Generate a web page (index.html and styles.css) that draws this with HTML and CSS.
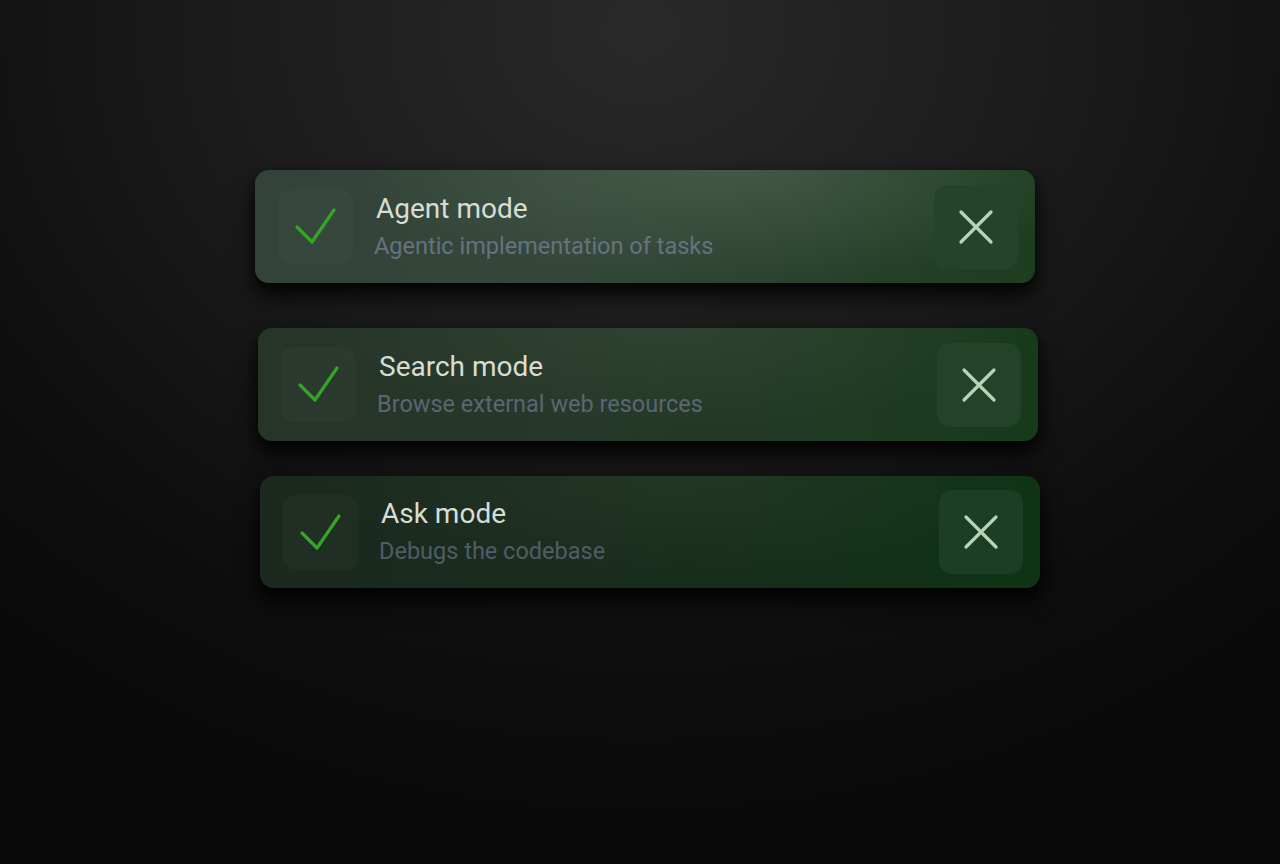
FILE: index.html
```html
<!DOCTYPE html>
<html lang="en">
<head>
<meta charset="utf-8">
<title>Modes</title>
<link rel="stylesheet" href="styles.css">
</head>
<body>
<main class="stage">
  <div class="list">
    <div class="card card--1">
      <div class="check">
        <svg width="75" height="75" viewBox="0 0 75 75"><path d="M19 38 L34 53 L56 21" fill="none" stroke="#33a626" stroke-width="3.2" stroke-linecap="round" stroke-linejoin="round"/></svg>
      </div>
      <div class="text">
        <div class="title">Agent mode</div>
        <div class="sub">Agentic implementation of tasks</div>
      </div>
      <div class="close">
        <svg width="84" height="84" viewBox="0 0 84 84"><path d="M27 27 L57 57 M57 27 L27 57" fill="none" stroke="#b9d3b6" stroke-width="3.2" stroke-linecap="round"/></svg>
      </div>
    </div>
    <div class="card card--2">
      <div class="check">
        <svg width="75" height="75" viewBox="0 0 75 75"><path d="M19 38 L34 53 L56 21" fill="none" stroke="#33a626" stroke-width="3.2" stroke-linecap="round" stroke-linejoin="round"/></svg>
      </div>
      <div class="text">
        <div class="title">Search mode</div>
        <div class="sub">Browse external web resources</div>
      </div>
      <div class="close">
        <svg width="84" height="84" viewBox="0 0 84 84"><path d="M27 27 L57 57 M57 27 L27 57" fill="none" stroke="#b9d3b6" stroke-width="3.2" stroke-linecap="round"/></svg>
      </div>
    </div>
    <div class="card card--3">
      <div class="check">
        <svg width="75" height="75" viewBox="0 0 75 75"><path d="M19 38 L34 53 L56 21" fill="none" stroke="#33a626" stroke-width="3.2" stroke-linecap="round" stroke-linejoin="round"/></svg>
      </div>
      <div class="text">
        <div class="title">Ask mode</div>
        <div class="sub">Debugs the codebase</div>
      </div>
      <div class="close">
        <svg width="84" height="84" viewBox="0 0 84 84"><path d="M27 27 L57 57 M57 27 L27 57" fill="none" stroke="#b9d3b6" stroke-width="3.2" stroke-linecap="round"/></svg>
      </div>
    </div>
  </div>
</main>
</body>
</html>
```

FILE: styles.css
```css
* { box-sizing: border-box; }
html, body {
  margin: 0;
  padding: 0;
  height: 100%;
}
body {
  font-family: Roboto, "Liberation Sans", sans-serif;
  background: radial-gradient(ellipse 950px 780px at 640px 30px, #292929 0%, #1b1b1b 45%, #0e0e0e 80%, #0a0a0a 100%);
  background-color: #0a0a0a;
  overflow: hidden;
}
.stage {
  width: 1280px;
  height: 864px;
  padding-top: 170px;
  padding-left: 255px;
}
.list {
  display: flex;
  flex-direction: column;
  width: 790px;
}
.card {
  width: 780px;
  height: 113px;
  border-radius: 14px;
  display: flex;
  align-items: center;
  padding: 0 17px 0 23px;
  box-shadow: 0 14px 22px rgba(0,0,0,0.75), 0 4px 8px rgba(0,0,0,0.5);
}
.card--1 {
  background:
    radial-gradient(ellipse 380px 110px at 480px 0px, rgba(95,115,95,0.45), rgba(95,115,95,0) 100%),
    linear-gradient(90deg, #34423a 0%, #34473a 40%, #27412c 75%, #1d3d20 100%);
}
.card--2 {
  margin-top: 45px;
  margin-left: 3px;
  background:
    radial-gradient(ellipse 360px 100px at 420px 0px, rgba(70,90,70,0.32), rgba(70,90,70,0) 100%),
    linear-gradient(90deg, #273428 0%, #26382a 40%, #1f3a23 75%, #173a1b 100%);
}
.card--3 {
  margin-top: 35px;
  margin-left: 5px;
  height: 112px;
  background:
    radial-gradient(ellipse 360px 100px at 420px 0px, rgba(60,80,60,0.28), rgba(60,80,60,0) 100%),
    linear-gradient(90deg, #1c291e 0%, #1a2c1e 40%, #14301a 75%, #0f3415 100%);
}
.check {
  width: 75px;
  height: 75px;
  flex: none;
  border-radius: 13px;
  background: rgba(255,255,255,0.022);
}
.check svg, .close svg { display: block; }
.text {
  flex: 1;
  display: flex;
  flex-direction: column;
  padding-left: 23px;
  gap: 6px;
  padding-bottom: 2px;
}
.title {
  font-size: 28px;
  color: #d8ddd4;
  line-height: 34px;
}
.sub {
  font-size: 23.5px;
  line-height: 28px;
  color: #66727f;
  margin-left: -2px;
}
.card--2 .sub { color: #5a6672; }
.card--3 .sub { color: #505c66; }
.close {
  width: 84px;
  height: 84px;
  flex: none;
  border-radius: 13px;
}
.card--1 .close { background: #25432a; }
.card--2 .close { background: #234228; }
.card--3 .close { background: #1c3e22; }
```
